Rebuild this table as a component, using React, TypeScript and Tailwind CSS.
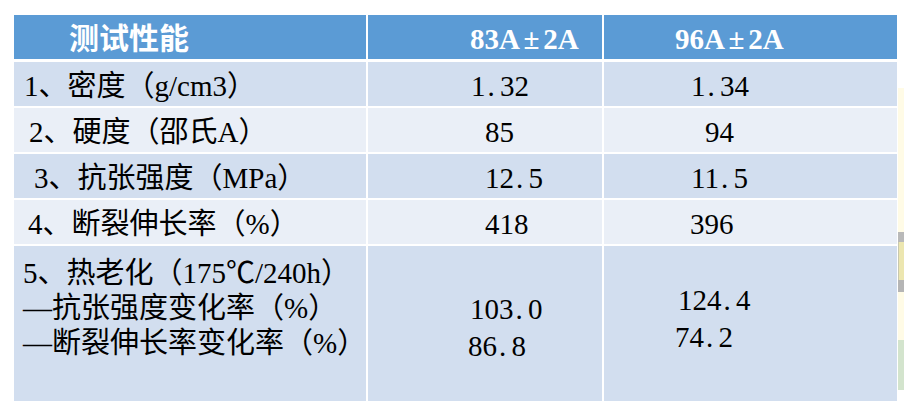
import React from "react";

const FONT = "font-['Liberation_Serif','Noto_Sans_CJK_SC',serif]";

function Num({ v }: { v: string }) {
  const parts = v.split(".");
  if (parts.length === 1) return <>{v}</>;
  return (
    <>
      {parts[0]}
      <span className="inline-block w-[0.5em] text-left pl-[2px]">.</span>
      {parts[1]}
    </>
  );
}

function Row({
  bg,
  label,
  labelPad,
  a,
  aPad,
  b,
  bPad,
  mt,
}: {
  bg: string;
  label: React.ReactNode;
  labelPad: string;
  a: string;
  aPad: string;
  b: string;
  bPad: string;
  mt: string;
}) {
  return (
    <div className={`flex gap-[2px] h-[44px] ${mt}`}>
      <div className={`w-[352px] ${bg} ${labelPad} pt-[9px] leading-[30px]`}>{label}</div>
      <div className={`w-[234px] ${bg} ${aPad} pt-[9px] leading-[30px]`}>
        <Num v={a} />
      </div>
      <div className={`w-[293px] ${bg} ${bPad} pt-[9px] leading-[30px]`}>
        <Num v={b} />
      </div>
    </div>
  );
}

function PM() {
  return <span className="inline-block w-[0.8em] text-center">±</span>;
}

export default function App() {
  const odd = "bg-[#d2deef]";
  const even = "bg-[#eaeff7]";
  return (
    <div className={`w-[904px] h-[405px] bg-white flex ${FONT} text-[29px] text-black overflow-hidden`}>
      <div className="ml-[14px] mt-[15px] w-[883px] flex flex-col">
        <div className="flex gap-[2px] h-[44px] text-white font-bold text-[30px]">
          <div className="w-[352px] bg-[#5b9bd5] pl-[55px] pt-[8px] leading-[32px]">测试性能</div>
          <div className="w-[234px] bg-[#5b9bd5] pl-[102px] pt-[8px] leading-[32px] text-[29px]">
            83A<PM />2A
          </div>
          <div className="w-[293px] bg-[#5b9bd5] pl-[71px] pt-[8px] leading-[32px] text-[29px]">
            96A<PM />2A
          </div>
        </div>
        <Row mt="mt-[3px]" bg={odd} label="1、密度（g/cm3）" labelPad="pl-[10px]" a="1.32" aPad="pl-[103px]" b="1.34" bPad="pl-[87px]" />
        <Row mt="mt-[2px]" bg={even} label="2、硬度（邵氏A）" labelPad="pl-[15px]" a="85" aPad="pl-[117px]" b="94" bPad="pl-[101px]" />
        <Row mt="mt-[2px]" bg={odd} label="3、抗张强度（MPa）" labelPad="pl-[20px]" a="12.5" aPad="pl-[117px]" b="11.5" bPad="pl-[87px]" />
        <Row mt="mt-[2px]" bg={even} label="4、断裂伸长率（%）" labelPad="pl-[14px]" a="418" aPad="pl-[117px]" b="396" bPad="pl-[86px]" />
        <div className="flex gap-[2px] h-[155px] mt-[2px]">
          <div className={`w-[352px] ${odd} pl-[9px] pt-[10px] leading-[35px]`}>
            <div>5、热老化（175℃/240h）</div>
            <div>—抗张强度变化率（%）</div>
            <div>—断裂伸长率变化率（%）</div>
          </div>
          <div className={`w-[234px] ${odd} pl-[102px] pt-[45px] leading-[37px]`}>
            <div><Num v="103.0" /></div>
            <div className="-ml-[2px]"><Num v="86.8" /></div>
          </div>
          <div className={`w-[293px] ${odd} pl-[74px] pt-[36px] leading-[37px]`}>
            <div><Num v="124.4" /></div>
            <div className="-ml-[3px]"><Num v="74.2" /></div>
          </div>
        </div>
      </div>
      <div className="ml-[1px] w-[6px] flex flex-col">
        <div className="h-[88px] bg-white" />
        <div className="h-[144px] bg-[#fffbe6]" />
        <div className="h-[10px] bg-[#b9b9b9]" />
        <div className="h-[38px] bg-[#ece6b0] border-l border-[#c8c8b0]" />
        <div className="h-[12px] bg-[#b5b5b5]" />
        <div className="h-[48px] bg-[#fffbe6]" />
        <div className="h-[50px] bg-[#d3e4cd]" />
        <div className="flex-1 bg-white" />
      </div>
    </div>
  );
}
